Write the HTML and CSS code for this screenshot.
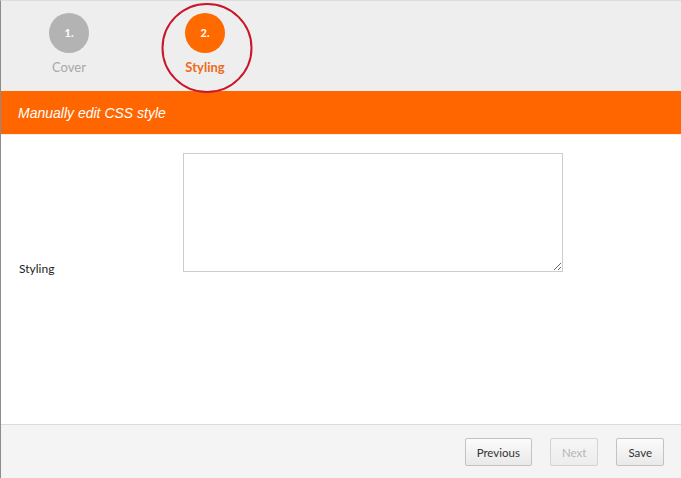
FILE: index.html
```html
<!DOCTYPE html>
<html lang="en">

<head>
    <meta charset="UTF-8">
    <meta name="viewport" content="width=device-width, initial-scale=1.0">
    <title>Wizard - Styling</title>
    <link rel="stylesheet" href="styles.css">
</head>

<body>
    <div class="wizard">
        <div class="steps">
            <div class="step">
                <div class="step-num">1.</div>
                <div class="step-label">Cover</div>
            </div>
            <div class="step active">
                <div class="step-num">2.</div>
                <div class="step-label">Styling</div>
            </div>
        </div>

        <div class="section-title">Manually edit CSS style</div>

        <div class="form">
            <div class="form-row">
                <label class="form-label" for="styling">Styling</label>
                <textarea class="form-input" id="styling"></textarea>
            </div>
        </div>

        <div class="footer">
            <button class="btn">Previous</button>
            <button class="btn" disabled>Next</button>
            <button class="btn">Save</button>
        </div>

        <!-- hand drawn mark around the active step -->
        <svg class="mark" width="96" height="96" viewBox="0 0 96 96">
            <ellipse cx="48" cy="47" rx="44.5" ry="44" fill="none" stroke="#c8172b" stroke-width="2" />
        </svg>
    </div>
</body>

</html>
```

FILE: styles.css
```css
* {
    box-sizing: border-box;
}

body {
    margin: 0;
    background: #fff;
    font-family: Lato, "Liberation Sans", sans-serif;
}

.wizard {
    position: relative;
    height: 478px;
    border-left: 1px solid #8c8c8c;
    border-top: 1px solid #dcdcdc;
    display: flex;
    flex-direction: column;
}

.steps {
    display: flex;
    height: 90px;
    padding-top: 12px;
    background: #eeeeee;
}

.step {
    width: 136px;
    text-align: center;
}

.step-num {
    width: 40px;
    height: 40px;
    margin: 0 auto;
    border-radius: 50%;
    background: #b3b3b3;
    color: #fff;
    font-size: 11px;
    font-weight: bold;
    line-height: 40px;
}

.step-label {
    margin-top: 6px;
    font-size: 13px;
    color: #a8a8a8;
}

.step.active .step-num {
    background: #ff6a00;
}

.step.active .step-label {
    color: #ee6b1c;
    font-weight: bold;
}

.section-title {
    height: 44px;
    line-height: 45px;
    padding-left: 17px;
    background: #ff6600;
    border-bottom: 1px solid #f2efe6;
    color: #fff;
    font-family: "Liberation Sans", Arial, sans-serif;
    font-style: italic;
    font-size: 14px;
}

.form {
    flex: 1;
    padding-top: 18px;
}

.form-row {
    display: flex;
    align-items: flex-end;
}

.form-label {
    width: 182px;
    padding-left: 18px;
    margin-bottom: -4px;
    font-size: 12px;
    color: #222;
}

.form-input {
    width: 380px;
    height: 119px;
    margin: 0;
    border: 1px solid #cccccc;
    border-radius: 0;
    resize: both;
    font-family: inherit;
}

.footer {
    height: 54px;
    display: flex;
    justify-content: flex-end;
    align-items: flex-start;
    gap: 18px;
    padding: 13px 17px 0 0;
    border-top: 1px solid #dcdcdc;
    background: #f4f4f4;
}

.btn {
    height: 28px;
    padding: 0 11px;
    border: 1px solid #c3c3c3;
    border-radius: 2px;
    background: linear-gradient(#fbfbfb, #e9e9e9);
    color: #333;
    font-family: Lato, "Liberation Sans", sans-serif;
    font-size: 11.5px;
    cursor: pointer;
}

.btn:disabled {
    color: #b5b5b5;
    border-color: #d3d3d3;
    background: linear-gradient(#f6f6f6, #ececec);
    cursor: default;
}

.mark {
    position: absolute;
    left: 158px;
    top: 0;
    pointer-events: none;
}
```
